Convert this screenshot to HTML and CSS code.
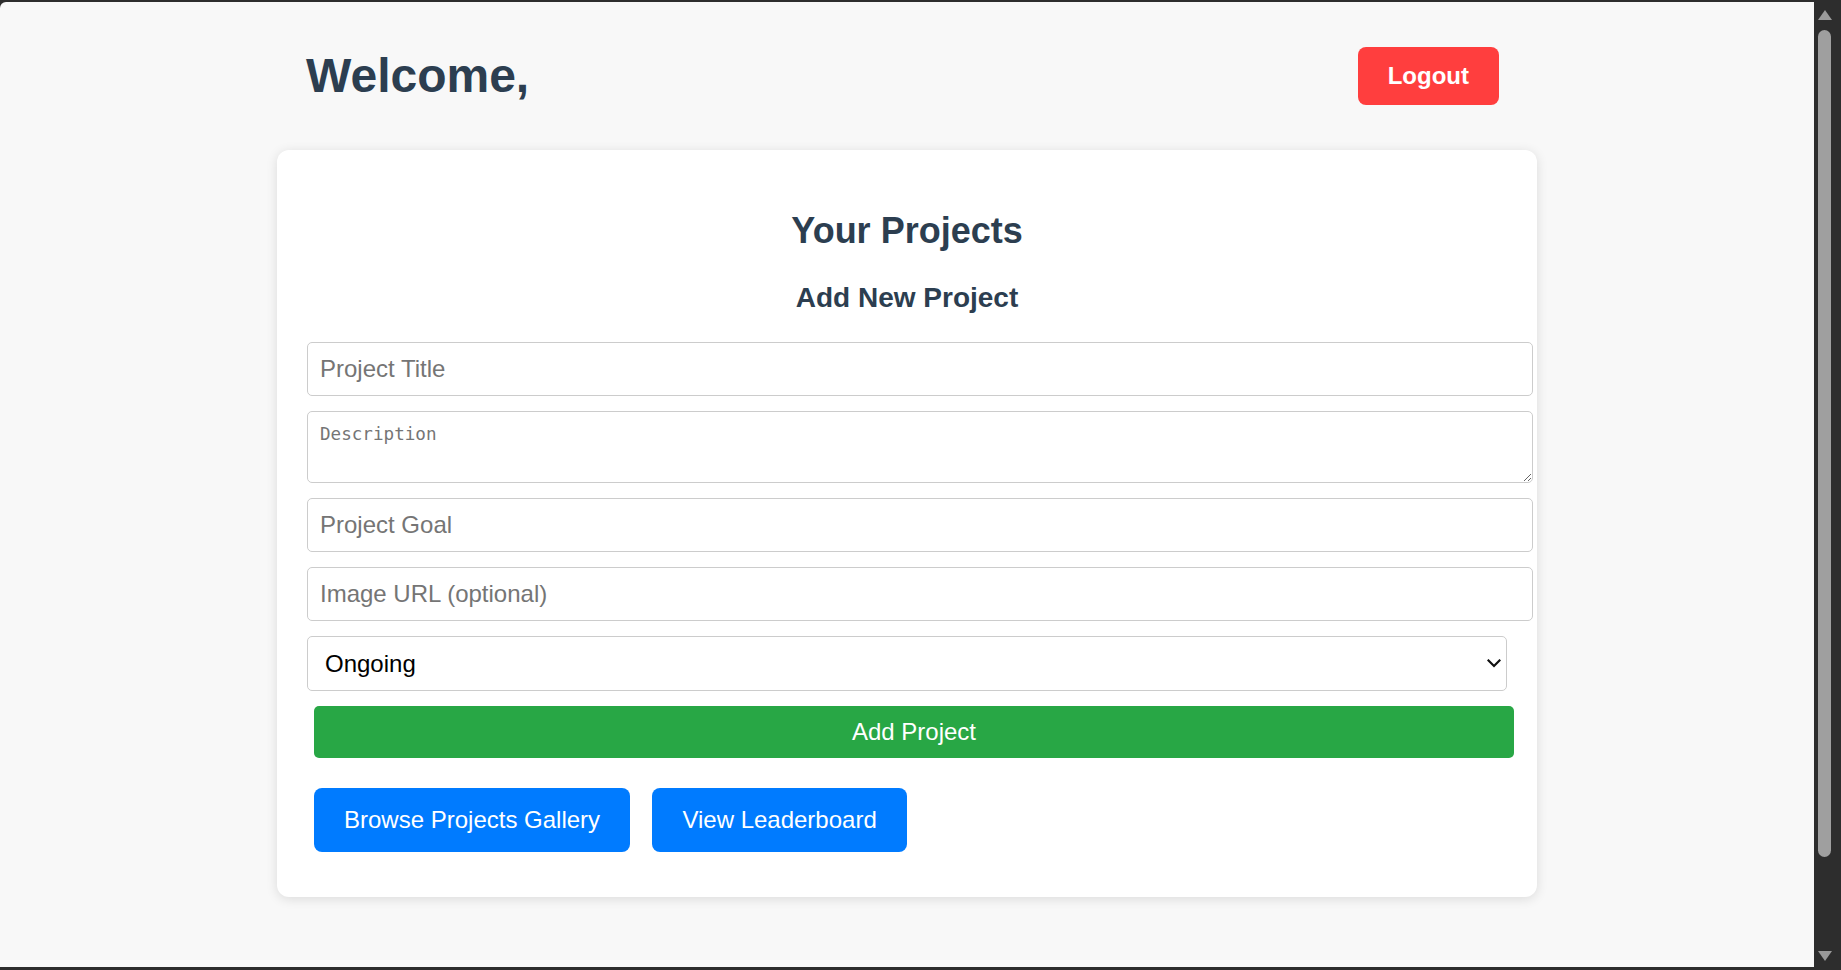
FILE: index.html
```html
<!DOCTYPE html>
<html lang="en">
<head>
<meta charset="utf-8">
<title>Dashboard</title>
<link rel="stylesheet" href="styles.css">
</head>
<body>
<div class="frame">
  <div class="viewport">
    <div class="container">
      <header class="topbar">
        <h1 class="welcome">Welcome,</h1>
        <button class="logout" type="button">Logout</button>
      </header>
      <main class="card">
        <h2 class="card-title">Your Projects</h2>
        <h3 class="card-subtitle">Add New Project</h3>
        <form class="project-form">
          <input class="field" type="text" placeholder="Project Title">
          <textarea class="field field-area" placeholder="Description"></textarea>
          <input class="field" type="text" placeholder="Project Goal">
          <input class="field" type="text" placeholder="Image URL (optional)">
          <div class="select-wrap">
            <select class="status">
              <option>Ongoing</option>
              <option>Completed</option>
            </select>
            <svg class="chev" width="14" height="9" viewBox="0 0 14 9" aria-hidden="true">
              <path d="M1.5 1.5 L7 7 L12.5 1.5" fill="none" stroke="#111" stroke-width="2.2" stroke-linecap="square"/>
            </svg>
          </div>
          <button class="add-btn" type="button">Add Project</button>
        </form>
        <div class="nav-row">
          <button class="nav-btn" type="button">Browse Projects Gallery</button>
          <button class="nav-btn" type="button">View Leaderboard</button>
        </div>
      </main>
    </div>
  </div>
  <div class="scrollbar">
    <div class="arrow arrow-up"></div>
    <div class="thumb"></div>
    <div class="track-rest"></div>
    <div class="arrow arrow-down"></div>
  </div>
</div>
</body>
</html>
```
FILE: styles.css
```css
* { box-sizing: content-box; }

html, body {
  margin: 0;
  padding: 0;
  background: #2d2d2d;
}

body {
  font-family: "Liberation Sans", Arial, sans-serif;
  overflow: hidden;
}

.frame {
  display: flex;
  width: 1841px;
  height: 970px;
  background: #2d2d2d;
}

.viewport {
  flex: 1;
  margin: 2px 0 3px 0;
  background: #f8f8f8;
  border-top-left-radius: 6px;
  overflow: hidden;
}

.container {
  width: 1260px;
  margin: 0 auto;
  padding-top: 44.7px;
}

.topbar {
  display: flex;
  justify-content: space-between;
  align-items: center;
  padding: 0 38px 0 29px;
  margin-bottom: 45.3px;
}

.welcome {
  margin: 0;
  font-size: 48px;
  font-weight: bold;
  color: #2c3e50;
  line-height: normal;
}

.logout {
  font-family: "Liberation Sans", Arial, sans-serif;
  font-size: 24px;
  font-weight: bold;
  color: #fff;
  background: #ff3e3e;
  border: none;
  border-radius: 8px;
  padding: 15px 30px;
  line-height: normal;
}

.card {
  display: block;
  background: #fff;
  border-radius: 12px;
  box-shadow: 0 2px 12px rgba(0, 0, 0, 0.12);
  padding: 30px 30px 45px 30px;
  box-sizing: border-box;
  width: 1260px;
}

.card-title {
  margin: 29.6px 0 0 0;
  text-align: center;
  font-size: 36px;
  font-weight: bold;
  color: #2c3e50;
  line-height: normal;
}

.card-subtitle {
  margin: 30.5px 0 27.8px 0;
  text-align: center;
  font-size: 28px;
  font-weight: bold;
  color: #2c3e50;
  line-height: normal;
}

.project-form {
  display: block;
}

.field {
  display: block;
  width: 100%;
  margin: 0 0 15px 0;
  padding: 12px;
  border: 1px solid #ccc;
  border-radius: 5px;
  font-family: "Liberation Sans", Arial, sans-serif;
  font-size: 24px;
  line-height: normal;
  color: #000;
  background: #fff;
}

.field::placeholder {
  color: #757575;
}

.field-area {
  height: 46px;
  font-family: "DejaVu Sans Mono", "Liberation Mono", monospace;
  font-size: 17.6px;
  resize: vertical;
}

.select-wrap {
  position: relative;
  margin: 0 0 15.4px 0;
}

.status {
  display: block;
  width: 100%;
  box-sizing: border-box;
  margin: 0;
  padding: 0 40px 0 17px;
  height: 54.7px;
  border: 1px solid #ccc;
  border-radius: 5px;
  background: #fff;
  font-family: "Liberation Sans", Arial, sans-serif;
  font-size: 24px;
  color: #000;
  -webkit-appearance: none;
  appearance: none;
}

.chev {
  position: absolute;
  right: 6px;
  top: 23px;
  pointer-events: none;
}

.add-btn {
  display: block;
  width: 100%;
  box-sizing: border-box;
  margin: 0 0 0 7px;
  padding: 12px;
  border: none;
  border-radius: 5px;
  background: #28a745;
  color: #fff;
  font-family: "Liberation Sans", Arial, sans-serif;
  font-size: 24px;
  line-height: normal;
}

.nav-row {
  display: flex;
  gap: 22.3px;
  margin-top: 30.4px;
  padding-left: 7px;
}

.nav-btn {
  padding: 18px 30px;
  border: none;
  border-radius: 8px;
  background: #007bff;
  color: #fff;
  font-family: "Liberation Sans", Arial, sans-serif;
  font-size: 24px;
  line-height: normal;
}

.scrollbar {
  width: 27px;
  display: flex;
  flex-direction: column;
  align-items: center;
  padding: 10px 6px 9px 0;
  box-sizing: border-box;
  background: #2d2d2d;
}

.arrow {
  width: 0;
  height: 0;
  border-left: 7.5px solid transparent;
  border-right: 7.5px solid transparent;
}

.arrow-up {
  border-bottom: 10px solid #9a9a9a;
  margin-bottom: 10px;
}

.arrow-down {
  border-top: 10px solid #9a9a9a;
}

.thumb {
  width: 13px;
  height: 827px;
  border-radius: 7px;
  background: #9f9f9f;
}

.track-rest {
  flex: 1;
}
```
